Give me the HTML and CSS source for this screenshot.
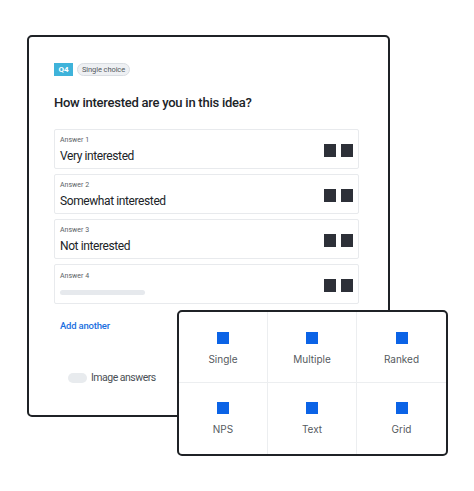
FILE: index.html
```html
<!DOCTYPE html>
<html lang="en">
<head>
    <meta charset="UTF-8">
    <meta name="viewport" content="width=device-width, initial-scale=1.0">
    <title>Question editor</title>
    <link rel="stylesheet" href="styles.css">
</head>
<body>

    <div class="stage">

        <!-- Question card -->
        <div class="card">
            <div class="tags">
                <span class="tag-num">Q4</span>
                <span class="tag-type">Single choice</span>
            </div>

            <h1 class="question">How interested are you in this idea?</h1>

            <div class="answers">
                <div class="answer">
                    <div class="answer-body">
                        <div class="answer-label">Answer 1</div>
                        <div class="answer-text">Very interested</div>
                    </div>
                    <div class="handles"><span></span><span></span></div>
                </div>
                <div class="answer">
                    <div class="answer-body">
                        <div class="answer-label">Answer 2</div>
                        <div class="answer-text">Somewhat interested</div>
                    </div>
                    <div class="handles"><span></span><span></span></div>
                </div>
                <div class="answer">
                    <div class="answer-body">
                        <div class="answer-label">Answer 3</div>
                        <div class="answer-text">Not interested</div>
                    </div>
                    <div class="handles"><span></span><span></span></div>
                </div>
                <div class="answer">
                    <div class="answer-body">
                        <div class="answer-label">Answer 4</div>
                        <div class="answer-empty"></div>
                    </div>
                    <div class="handles"><span></span><span></span></div>
                </div>
            </div>

            <a class="add-link" href="#">Add another</a>

            <div class="toggle-row">
                <span class="toggle"></span>
                <span class="toggle-label">Image answers</span>
            </div>
        </div>

        <!-- Question type menu -->
        <div class="type-menu">
            <div class="type-cell"><span class="type-icon"></span><span>Single</span></div>
            <div class="type-cell"><span class="type-icon"></span><span>Multiple</span></div>
            <div class="type-cell"><span class="type-icon"></span><span>Ranked</span></div>
            <div class="type-cell"><span class="type-icon"></span><span>NPS</span></div>
            <div class="type-cell"><span class="type-icon"></span><span>Text</span></div>
            <div class="type-cell"><span class="type-icon"></span><span>Grid</span></div>
        </div>

    </div>

</body>
</html>
```

FILE: styles.css
```css
body {
    margin: 0;
    background-color: #fff;
    font-family: Roboto, "Liberation Sans", sans-serif;
    color: #24272b;
}
.stage {
    position: relative;
    width: 474px;
    height: 491px;
    padding: 35px 0 0 27px;
    box-sizing: border-box;
}
.card {
    width: 363px;
    height: 382px;
    box-sizing: border-box;
    border: 2px solid #1f2226;
    border-radius: 5px;
    padding: 26px 29px 0 25px;
    background-color: #fff;
}
.tags {
    display: flex;
    gap: 4px;
    height: 13px;
}
.tag-num {
    width: 19px;
    background-color: #3fb3da;
    color: #fff;
    font-size: 8px;
    font-weight: 700;
    line-height: 13px;
    text-align: center;
}
.tag-type {
    padding: 0 4px;
    background-color: #eef0f3;
    border: 1px solid #d9dde2;
    border-radius: 7px;
    color: #555a60;
    font-size: 7.5px;
    letter-spacing: -0.1px;
    line-height: 11px;
}
.question {
    margin: 17px 0 16px;
    font-size: 13px;
    font-weight: 500;
    letter-spacing: -0.25px;
    line-height: 20px;
    color: #202327;
}
.answers {
    display: flex;
    flex-direction: column;
    gap: 5px;
}
.answer {
    display: flex;
    align-items: center;
    height: 40px;
    box-sizing: border-box;
    border: 1px solid #e8eaed;
    border-radius: 2px;
    padding: 0 5px 0 5px;
}
.answer-body {
    flex: 1;
    padding-top: 1px;
}
.answer-label {
    font-size: 7px;
    line-height: 10px;
    color: #5a5f66;
}
.answer-text {
    margin-top: 3px;
    font-size: 12px;
    letter-spacing: -0.4px;
    line-height: 16px;
    color: #202327;
}
.answer-empty {
    width: 85px;
    height: 5px;
    margin: 9px 0 4px;
    border-radius: 3px;
    background-color: #e6e9ed;
}
.handles {
    display: flex;
    gap: 5px;
    margin-top: 3px;
}
.handles span {
    width: 12px;
    height: 13px;
    background-color: #2d3038;
}
.add-link {
    display: inline-block;
    margin: 15px 0 0 6px;
    font-size: 9.5px;
    font-weight: 500;
    letter-spacing: -0.2px;
    line-height: 14px;
    color: #1a6fe0;
    text-decoration: none;
}
.toggle-row {
    display: flex;
    align-items: center;
    gap: 4px;
    margin: 38px 0 0 14px;
}
.toggle {
    width: 19px;
    height: 10px;
    border-radius: 5px;
    background-color: #e8ebee;
}
.toggle-label {
    font-size: 10.5px;
    letter-spacing: -0.5px;
    line-height: 14px;
    color: #4a4f55;
}
.type-menu {
    position: absolute;
    left: 177px;
    top: 310px;
    width: 271px;
    height: 146px;
    box-sizing: border-box;
    border: 2px solid #1f2226;
    border-radius: 5px;
    background-color: #fff;
    display: grid;
    grid-template-columns: repeat(3, 1fr);
    grid-template-rows: repeat(2, 1fr);
    overflow: hidden;
}
.type-cell {
    display: flex;
    flex-direction: column;
    align-items: center;
    gap: 8px;
    padding-top: 20px;
    border-right: 1px solid #eceef0;
    border-bottom: 1px solid #eceef0;
    font-family: Inter, sans-serif;
    font-size: 10px;
    line-height: 14px;
    color: #555a60;
}
.type-cell:nth-child(3n) {
    border-right: none;
}
.type-cell:nth-child(n+4) {
    border-bottom: none;
    padding-top: 19px;
}
.type-icon {
    width: 12px;
    height: 12px;
    background-color: #0b63e6;
}
```
